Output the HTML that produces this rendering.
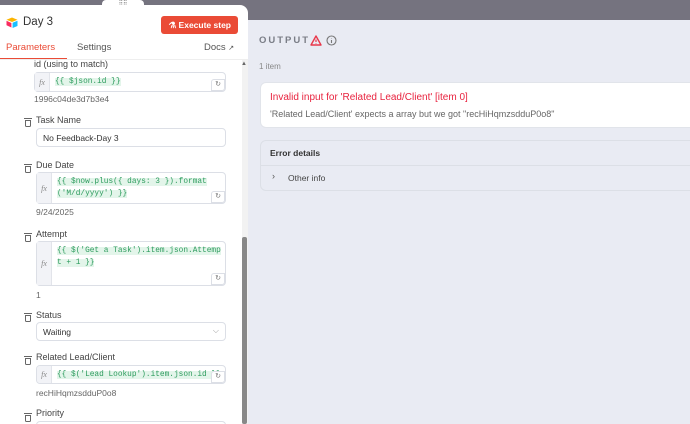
<!DOCTYPE html>
<html><head><meta charset="utf-8"><style>
*{box-sizing:border-box;margin:0;padding:0}
body{width:690px;height:424px;overflow:hidden;background:#75737f;font-family:"Liberation Sans",sans-serif;position:relative}
.right{position:absolute;left:240px;top:20px;width:450px;height:404px;background:#e9ebf3}
.panel{position:absolute;left:0;top:5px;width:248px;height:419px;background:#fff;border-radius:0 8px 0 0;overflow:hidden}
.handle{position:absolute;left:102px;top:0;width:42px;height:10px;background:#fff;border-radius:4px 4px 0 0;z-index:3;text-align:center;font-size:6px;color:#777;line-height:8px}
.abs{position:absolute}
.lbl{position:absolute;font-size:9px;color:#444}
.hint{position:absolute;font-size:8.5px;color:#666}
.input{position:absolute;left:36px;width:190px;border:1px solid #dcdfe6;border-radius:4px;background:#fff}
.fx{position:absolute;left:0;top:0;bottom:0;width:15px;background:#f2f3f7;border-right:1px solid #e2e4ea;font-family:"Liberation Serif",serif;font-style:italic;font-size:8px;color:#888;display:flex;align-items:center;justify-content:center}
.code{position:absolute;left:20px;top:3px;right:4px;font-family:"Liberation Mono",monospace;font-size:7.8px;color:#2e9c5e;line-height:12px;word-break:break-all}
.code span{background:#e3f5ea}
.rb{position:absolute;right:0;bottom:0;width:14px;height:12px;border:1px solid #dcdfe6;border-radius:3px 0 3px 0;background:#fff;font-size:7px;color:#777;text-align:center;line-height:10px}
.trash{position:absolute;left:25px;width:6px;height:7px;border:1.1px solid #666;border-radius:0 0 1.5px 1.5px}
.trash:before{content:"";position:absolute;left:-2px;top:-3px;width:8px;height:1px;background:#666}
</style></head><body>
<div class="right">
  <div class="abs" style="left:19px;top:15px;font-size:9.5px;letter-spacing:2px;color:#7a7d86;font-weight:bold">OUTPUT</div>
  <svg class="abs" style="left:70px;top:15px" width="12" height="11" viewBox="0 0 12 11"><path d="M6 1 L11 10 H1 Z" fill="none" stroke="#e8374a" stroke-width="1.4" stroke-linejoin="round"/><path d="M6 4.5v2.5M6 8.3v.4" stroke="#e8374a" stroke-width="1.2"/></svg>
  <svg class="abs" style="left:86px;top:15px" width="11" height="11" viewBox="0 0 11 11"><circle cx="5.5" cy="5.5" r="4.5" fill="none" stroke="#777" stroke-width="1.1"/><path d="M5.5 5v3M5.5 3.2v.4" stroke="#777" stroke-width="1.1"/></svg>
  <div class="abs" style="left:19px;top:42px;font-size:8px;color:#888">1 item</div>
  <div class="abs" style="left:20px;top:62px;width:445px;height:46px;background:#fff;border-radius:6px;border:1px solid #e1e4ea"></div>
  <div class="abs" style="left:30px;top:72px;font-size:10px;color:#e8233f">Invalid input for 'Related Lead/Client' [item 0]</div>
  <div class="abs" style="left:30px;top:89px;font-size:9px;color:#666">'Related Lead/Client' expects a array but we got "recHiHqmzsdduP0o8"</div>
  <div class="abs" style="left:20px;top:120px;width:445px;height:51px;border:1px solid #dcdfe6;border-radius:6px;background:#e9ebf3"></div>
  <div class="abs" style="left:20px;top:145px;width:445px;height:1px;background:#dcdfe6"></div>
  <div class="abs" style="left:30px;top:128px;font-size:8.5px;color:#333;font-weight:bold">Error details</div>
  <div class="abs" style="left:32px;top:151px;font-size:9px;color:#555">›</div>
  <div class="abs" style="left:48px;top:153px;font-size:8.5px;color:#444">Other info</div>
</div>
<div class="handle">⠿⠿</div>
<div class="panel">
  <svg class="abs" style="left:6px;top:12px" width="12" height="11" viewBox="0 0 12 11"><path d="M6 0.5 L11.5 2.8 L6 5 L0.5 2.8Z" fill="#fcb400"/><path d="M6.6 5.8 L11.5 3.8 V9 L6.6 11Z" fill="#18bfff"/><path d="M0.5 3.8 L5.4 6 V10.5 L0.5 8.3Z" fill="#f82b60"/></svg>
  <div class="abs" style="left:23px;top:11px;font-size:11.5px;color:#333">Day 3</div>
  <div class="abs" style="left:161px;top:11px;width:77px;height:18px;background:#ea4b36;border-radius:3px;color:#fff;font-size:8.5px;font-weight:bold;line-height:18px;text-align:right;padding-right:7px">⚗ Execute step</div>
  <div class="abs" style="left:6px;top:37px;font-size:9.5px;color:#ea4b36">Parameters</div>
  <div class="abs" style="left:0;top:53px;width:67px;height:1.5px;background:#ea4b36"></div>
  <div class="abs" style="left:77px;top:37px;font-size:9.5px;color:#555">Settings</div>
  <div class="abs" style="left:204px;top:37px;font-size:9.5px;color:#555">Docs <span style="font-size:7px">↗</span></div>
  <div class="abs" style="left:0;top:54px;width:248px;height:1px;background:#eee"></div>
  <div class="abs" style="left:242px;top:55px;width:6px;height:364px;background:#f2f2f2"></div>
  <div class="abs" style="left:242px;top:232px;width:5px;height:187px;background:#888;border-radius:2px"></div>
  <div class="abs" style="left:241px;top:56px;font-size:6px;color:#666">▲</div>

  <div class="lbl" style="left:34px;top:54px">id (using to match)</div>
  <div class="input" style="left:34px;top:67px;height:20px;width:192px"><div class="fx">fx</div><div class="code"><span>{{ $json.id }}</span></div><div class="rb">↻</div></div>
  <div class="hint" style="left:34px;top:89px">1996c04de3d7b3e4</div>

  <div class="trash" style="top:115px"></div>
  <div class="lbl" style="top:110px;left:36px">Task Name</div>
  <div class="input" style="top:123px;height:19px;padding:4px 6px;font-size:8.5px;color:#333">No Feedback-Day 3</div>

  <div class="trash" style="top:161px"></div>
  <div class="lbl" style="top:155px;left:36px">Due Date</div>
  <div class="input" style="top:167px;height:32px"><div class="fx">fx</div><div class="code"><span>{{ $now.plus({ days: 3 }).format ('M/d/yyyy') }}</span></div><div class="rb">↻</div></div>
  <div class="hint" style="left:36px;top:202px">9/24/2025</div>

  <div class="trash" style="top:230px"></div>
  <div class="lbl" style="top:224px;left:36px">Attempt</div>
  <div class="input" style="top:236px;height:45px"><div class="fx">fx</div><div class="code"><span>{{ $('Get a Task').item.json.Attempt + 1 }}</span></div><div class="rb">↻</div></div>
  <div class="hint" style="left:36px;top:285px">1</div>

  <div class="trash" style="top:310px"></div>
  <div class="lbl" style="top:305px;left:36px">Status</div>
  <div class="input" style="top:317px;height:19px;padding:4px 6px;font-size:8.5px;color:#333">Waiting<span style="position:absolute;right:6px;top:3px;color:#999;font-size:8px">⌵</span></div>

  <div class="trash" style="top:353px"></div>
  <div class="lbl" style="top:347px;left:36px">Related Lead/Client</div>
  <div class="input" style="top:360px;height:19px;overflow:hidden"><div class="fx">fx</div><div class="code" style="white-space:nowrap;overflow:hidden;word-break:normal"><span>{{ $('Lead Lookup').item.json.id }}</span></div><div class="rb">↻</div></div>
  <div class="hint" style="left:36px;top:383px">recHiHqmzsdduP0o8</div>

  <div class="trash" style="top:410px"></div>
  <div class="lbl" style="top:403px;left:36px">Priority</div>
  <div class="input" style="top:416px;height:19px"></div>
</div>
</body></html>
